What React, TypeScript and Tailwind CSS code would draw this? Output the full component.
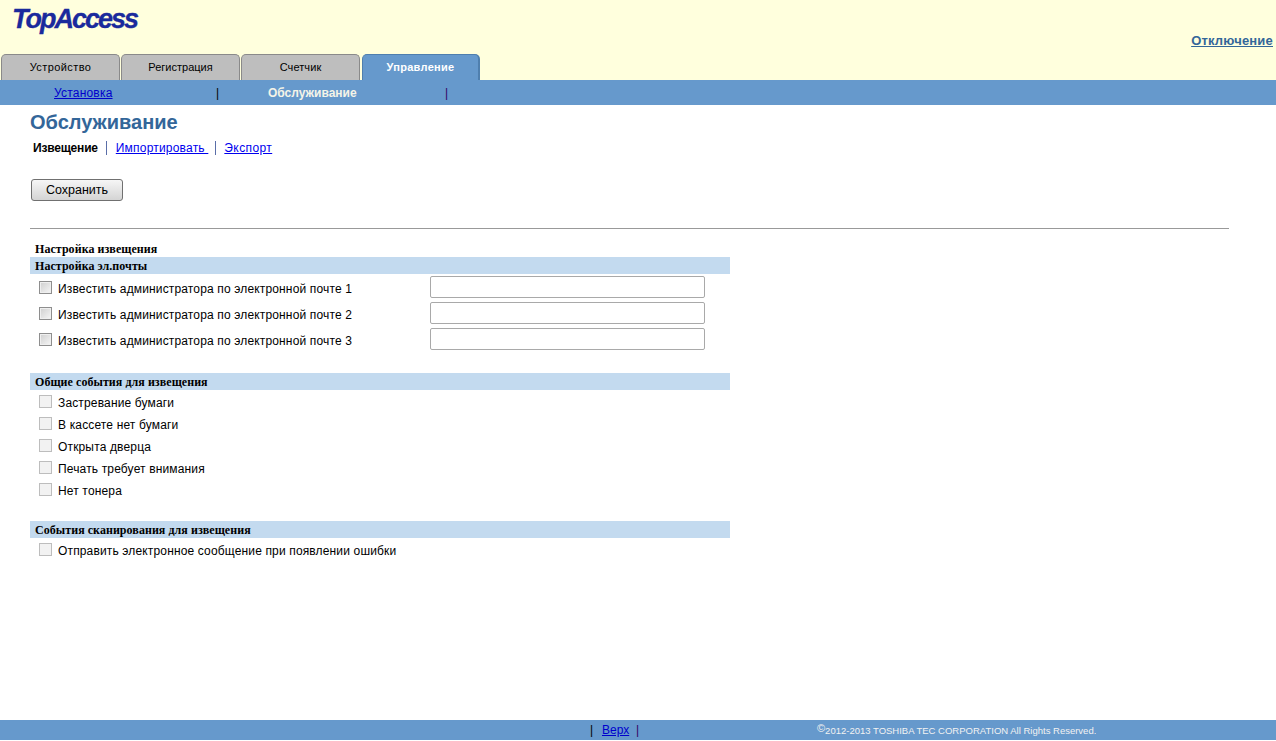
const tabs = [
  { name: "Устройство", cls: "tracking-[0.4px]" },
  { name: "Регистрация", cls: "" },
  { name: "Счетчик", cls: "tracking-[0.1px]" },
];
const emails = [1, 2, 3];
const generalEvents = [
  "Застревание бумаги",
  "В кассете нет бумаги",
  "Открыта дверца",
  "Печать требует внимания",
  "Нет тонера",
];

function SectionBar({ title }: { title: string }) {
  return (
    <div className="flex h-[17px] w-[700px] items-center bg-[#c3daef] pl-[5px] font-['Liberation_Serif',serif] text-[12px] font-bold tracking-[0.05px] text-black">
      {title}
    </div>
  );
}

function CheckRow({ label }: { label: string }) {
  return (
    <label className="flex h-[22px] items-center pl-[9px] text-[12px] tracking-[0.15px] text-black">
      <input
        type="checkbox"
        disabled
        className="h-[13px] w-[13px] appearance-none border border-[#bdbdbd] bg-[#f2f2f2]"
      />
      <span className="ml-[6px] mt-[4px]">{label}</span>
    </label>
  );
}

export default function App() {
  return (
    <div className="flex h-[741px] w-[1276px] flex-col overflow-hidden bg-white font-['Liberation_Sans',Arial,sans-serif]">
      <header className="relative h-[80px] bg-[#ffffdd]">
        <div className="flex h-[54px] items-start justify-between">
          <span className="ml-[12px] mt-px text-[27px] font-bold italic leading-[36px] tracking-[-2px] text-[#1a2a9c] [-webkit-text-stroke:0.3px_#1a2a9c]">
            TopAccess
          </span>
          <a href="#" className="mr-[3px] mt-[32px] text-[13px] font-bold leading-[18px] tracking-[0.2px] text-[#336699] underline">
            Отключение
          </a>
        </div>
        <nav className="flex h-[26px] pl-[1px]">
          {tabs.map((tab) => (
            <div
              key={tab.name}
              className={`mr-px flex h-[26px] w-[119px] items-center justify-center rounded-t-[5px] border border-b-0 border-[#8a8a8a] bg-[#bebebe] text-[11px] text-black ${tab.cls}`}
            >
              {tab.name}
            </div>
          ))}
          <div className="ml-px flex h-[26px] w-[118px] items-center justify-center rounded-t-[5px] border border-b-0 border-r-2 border-[#4f7fae] bg-[#6699cc] text-[11px] font-bold tracking-[0.3px] text-white">
            Управление
          </div>
        </nav>
      </header>

      <div className="flex h-[25px] items-center bg-[#6699cc] text-[12px]">
        <a href="#" className="ml-[54px] w-[162px] tracking-[0.2px] text-[#0000cc] underline">
          Установка
        </a>
        <span className="w-[52px] text-black">|</span>
        <span className="w-[177px] font-bold text-[#f4f4e8]">Обслуживание</span>
        <span className="text-[#330066]">|</span>
      </div>

      <main className="flex-1 pl-[30px]">
        <h1 className="mt-[6px] text-[20px] font-bold leading-[23px] text-[#336699]">Обслуживание</h1>
        <div className="mt-[6px] flex h-[16px] items-center pl-[3px] text-[12px]">
          <b className="tracking-[-0.2px] text-black">Извещение</b>
          <span className="ml-[8px] mr-[9px] h-[14px] w-px bg-[#5a6ea8]" />
          <a href="#" className="tracking-[0.2px] text-[#0000ee] underline">
            Импортировать&nbsp;
          </a>
          <span className="ml-[7px] mr-[8px] h-[14px] w-px bg-[#5a6ea8]" />
          <a href="#" className="tracking-[0.4px] text-[#0000ee] underline">
            Экспорт
          </a>
        </div>
        <button className="ml-px mt-[23px] block h-[22px] w-[92px] rounded-[3px] border border-[#707070] bg-linear-to-b from-[#f6f6f6] to-[#d4d4d4] text-[12.5px] text-black">
          Сохранить
        </button>
        <hr className="mt-[27px] w-[1199px] border-t border-[#999999]" />

        <div className="mt-[13px] h-[15px] pl-[5px] font-['Liberation_Serif',serif] text-[12px] font-bold leading-[15px] tracking-[0.05px] text-black">
          Настройка извещения
        </div>
        <SectionBar title="Настройка эл.почты" />
        <div className="mt-[2px] flex flex-col gap-[4px]">
          {emails.map((n) => (
            <div key={n} className="flex h-[22px] w-[675px] items-center justify-between pl-[9px]">
              <label className="flex items-center text-[12px] tracking-[0.15px] text-black">
                <input
                  type="checkbox"
                  className="h-[13px] w-[13px] appearance-none border border-[#8e8e8e] bg-linear-to-br from-[#cfcfcf] to-[#f6f6f6] shadow-[inset_0_0_0_1px_#efefef]"
                />
                <span className="ml-[6px] mt-[4px]">Известить администратора по электронной почте {n}</span>
              </label>
              <input
                type="text"
                className="h-[22px] w-[275px] rounded-[2px] border border-[#a9a9a9] bg-white"
              />
            </div>
          ))}
        </div>

        <div className="mt-[23px]">
          <SectionBar title="Общие события для извещения" />
        </div>
        <div className="flex flex-col">
          {generalEvents.map((item) => (
            <CheckRow key={item} label={item} />
          ))}
        </div>

        <div className="mt-[21px]">
          <SectionBar title="События сканирования для извещения" />
        </div>
        <CheckRow label="Отправить электронное сообщение при появлении ошибки" />
      </main>

      <footer className="mb-px flex h-[20px] items-center bg-[#6699cc] pl-[590px] text-[12px]">
        <span className="w-[12px] text-black">|</span>
        <a href="#" className="w-[34px] text-[#0000cc] underline">
          Верх
        </a>
        <span className="w-[181px] text-[#330066]">|</span>
        <span className="text-[9.5px] text-[#f2f2f2]">
          <span className="relative top-[-2px] text-[11px]">©</span>2012-2013 TOSHIBA TEC CORPORATION All Rights Reserved.
        </span>
      </footer>
    </div>
  );
}
